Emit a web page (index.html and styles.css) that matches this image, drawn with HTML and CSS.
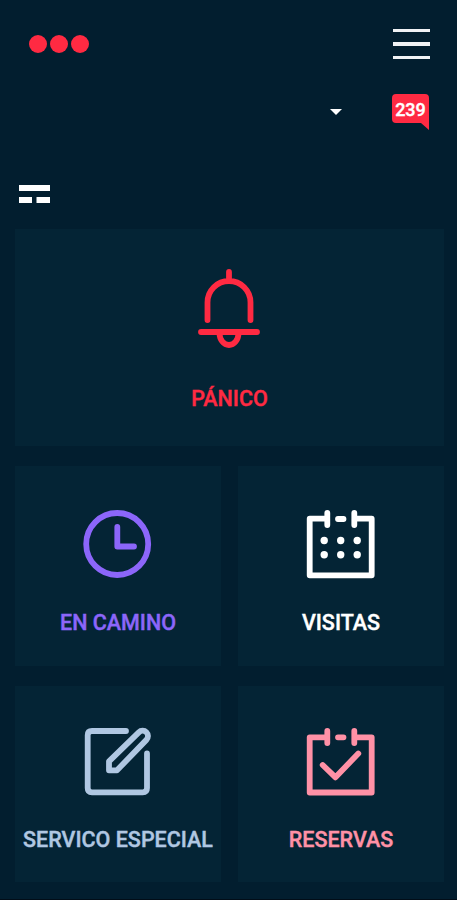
FILE: index.html
```
<!DOCTYPE html>
<html lang="es">
<head>
    <meta charset="UTF-8">
    <meta name="viewport" content="width=device-width, initial-scale=1.0">
    <title>Inicio</title>
    <link rel="stylesheet" href="styles.css">
</head>
<body>
    <header class="topbar">
        <div class="logo"><span></span><span></span><span></span></div>
        <button class="menu" aria-label="Menú"><span></span><span></span><span></span></button>
    </header>

    <div class="account">
        <svg class="caret" viewBox="0 0 12 6"><path d="M0 0h12L6 6z"/></svg>
        <div class="messages">
            <svg viewBox="0 0 37 36"><path d="M4 0H33Q37 0 37 4V36L29 29H4Q0 29 0 25V4Q0 0 4 0Z"/></svg>
            <span class="count">239</span>
        </div>
    </div>

    <svg class="view-icon" viewBox="0 0 31 18">
        <path d="M0 0h31v6H0zM0 12h13v6H0zM17.5 12H31v6H17.5z"/>
    </svg>

    <main class="grid">
        <a class="card panic">
            <svg class="bell" viewBox="195 267 70 84">
                <path d="M229 272v8M207.5 320v-17.5a21.5 21.5 0 0 1 43 0V320M201 332h56M219.5 333a9.5 12 0 0 0 19 0"/>
            </svg>
            <span>PÁNICO</span>
        </a>
        <a class="card on-way">
            <svg viewBox="82 508 72 72">
                <circle cx="117.2" cy="544" r="31"/>
                <path d="M117.3 527v19.5H134"/>
            </svg>
            <span>EN CAMINO</span>
        </a>
        <a class="card visits">
            <svg viewBox="305 508 72 72">
                <path d="M327.3 518.7H309.7V575.3H371.7V518.7H354.3M327.3 513v12M354.3 513v12M338 519h5.5"/>
                <g class="days">
                    <circle cx="324.2" cy="540.5" r="3.7"/>
                    <circle cx="340.7" cy="540.5" r="3.7"/>
                    <circle cx="357.2" cy="540.5" r="3.7"/>
                    <circle cx="324.2" cy="554.7" r="3.7"/>
                    <circle cx="340.7" cy="554.7" r="3.7"/>
                    <circle cx="357.2" cy="554.7" r="3.7"/>
                </g>
            </svg>
            <span>VISITAS</span>
        </a>
        <a class="card special">
            <svg viewBox="82 726 72 72">
                <path d="M126 731H92q-4.3 0-4.3 4.3V788q0 4.3 4.3 4.3h50.7q4.3 0 4.3-4.3V753.5"/>
                <path d="M109 770.3V761.3L138.8 732.3a5.3 5.3 0 0 1 7.6 7.6L117 770.3Z"/>
            </svg>
            <span>SERVICO ESPECIAL</span>
        </a>
        <a class="card bookings">
            <svg viewBox="305 726 72 72">
                <path d="M327.3 737.3H309.7V792.5H371.7V737.3H354.3M327.3 731v12M354.3 731v12M338 737.3h5.5M322.7 765l12.8 12.3L358.3 753.5"/>
            </svg>
            <span>RESERVAS</span>
        </a>
    </main>
</body>
</html>
```
FILE: styles.css
```
* {
    box-sizing: border-box;
}
body {
    margin: 0;
    height: 900px;
    background-color: #021e2f;
    border-bottom: 1px solid #010d18;
    color: #fff;
    font-family: Roboto, "Liberation Sans", sans-serif;
    overflow: hidden;
}
svg {
    display: block;
}
.topbar {
    display: flex;
    justify-content: space-between;
    align-items: center;
    height: 88px;
    padding: 0 27px 0 29px;
}
.logo {
    display: flex;
    gap: 3px;
}
.logo span {
    width: 18px;
    height: 18px;
    border-radius: 50%;
    background-color: #ff2a42;
}
.menu {
    display: flex;
    flex-direction: column;
    gap: 10px;
    padding: 0;
    border: none;
    background: none;
}
.menu span {
    width: 37px;
    height: 3.5px;
    background-color: #f0f2f5;
}
.account {
    display: flex;
    justify-content: flex-end;
    gap: 50px;
    height: 97px;
    padding: 6px 28px 0 0;
}
.caret {
    width: 12px;
    height: 6px;
    margin-top: 15px;
    fill: #fff;
}
.messages {
    position: relative;
    width: 37px;
    height: 36px;
}
.messages svg {
    width: 37px;
    height: 36px;
    fill: #ff2a42;
}
.count {
    position: absolute;
    top: 0;
    left: 0;
    width: 37px;
    line-height: 32px;
    text-align: center;
    font-size: 18px;
    font-weight: 500;
    -webkit-text-stroke: 0.4px currentColor;
}
.view-icon {
    width: 31px;
    height: 18px;
    margin-left: 19px;
    fill: #fff;
}
.grid {
    display: grid;
    grid-template-columns: 206px 206px;
    grid-template-rows: 217px 200px 196px;
    gap: 20px 17px;
    padding: 26px 13px 0 15px;
}
.card {
    display: flex;
    flex-direction: column;
    align-items: center;
    background-color: #042435;
    font-size: 21.5px;
    font-weight: 500;
    line-height: 26px;
    white-space: nowrap;
    -webkit-text-stroke: 0.4px currentColor;
}
.card svg {
    width: 72px;
    height: 72px;
    margin: 42px 0 30px;
    fill: none;
    stroke: currentColor;
    stroke-width: 5.8;
    stroke-linecap: round;
    stroke-linejoin: round;
}
.card .bell {
    width: 70px;
    height: 84px;
    margin: 38px 0 35px;
}
.card .days {
    fill: currentColor;
    stroke: none;
}
.panic {
    grid-column: span 2;
    color: #ff2a42;
}
.on-way {
    color: #8c66fa;
}
.visits {
    color: #fff;
}
.special {
    color: #b0c7e2;
}
.bookings {
    color: #ff91a6;
}
.special svg,
.bookings svg {
    margin: 40px 0 29px;
}
```
